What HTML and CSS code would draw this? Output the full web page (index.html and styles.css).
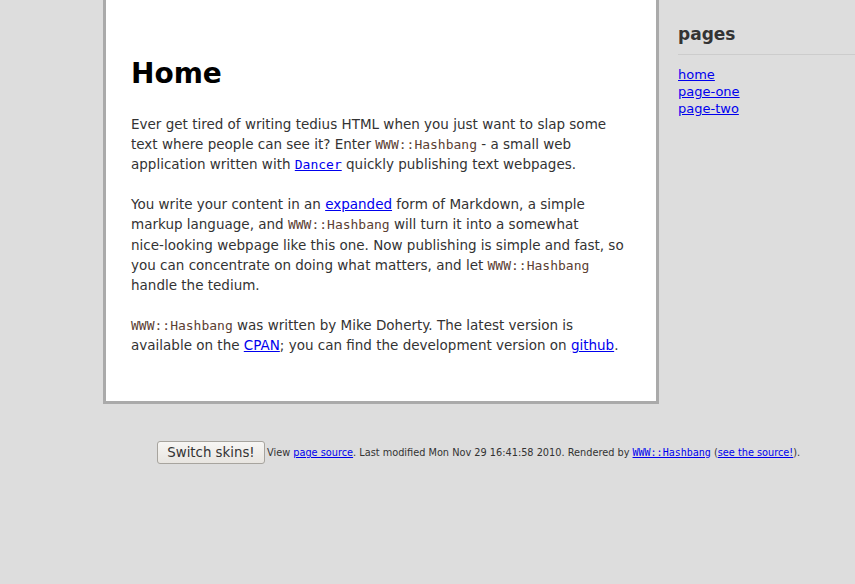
FILE: index.html
```html
<!DOCTYPE html>
<html>
<head>
<meta charset="utf-8">
<title>Home</title>
<link rel="stylesheet" href="styles.css">
</head>
<body>
<div class="page">
  <div class="main">
    <h1 class="title">Home</h1>
    <p class="para">Ever get tired of writing tedius HTML when you just want to slap some text where people can see it? Enter <code class="code">WWW::Hashbang</code> - a small web application written with <a href="#"><code class="code link-code">Dancer</code></a> quickly publishing text webpages.</p>
    <p class="para">You write your content in an <a href="#">expanded</a> form of Markdown, a simple markup language, and <code class="code">WWW::Hashbang</code> will turn it into a somewhat <span class="nowrap">nice-looking</span> webpage like this one. Now publishing is simple and fast, so you can concentrate on doing what matters, and let <code class="code">WWW::Hashbang</code> handle the tedium.</p>
    <p class="para">
<code class="code">WWW::Hashbang</code> was written by Mike Doherty. The latest version is available on the <a href="#">CPAN</a>; you can find the development version on <a href="#">github</a>.</p>
  </div>
  <div class="sidebar">
    <h2 class="side-title">pages</h2>
    <ul class="side-list">
      <li><a href="#">home</a></li>
      <li><a href="#">page-one</a></li>
      <li><a href="#">page-two</a></li>
    </ul>
  </div>
</div>
<div class="footer">
  <button class="skin-btn">Switch skins!</button>
  <span class="foot-text">View <a href="#">page source</a>. Last modified Mon Nov 29 16:41:58 2010. Rendered by <a href="#"><code class="foot-code">WWW::Hashbang</code></a> (<a href="#">see the source!</a>).</span>
</div>
</body>
</html>
```
FILE: styles.css
```css
html, body {
  margin: 0;
  padding: 0;
  background: #dddddd;
}
body {
  font-family: "DejaVu Sans", Verdana, sans-serif;
  color: #333333;
}
a {
  color: #0000ee;
}
.page {
  display: flex;
  align-items: flex-start;
}
.main {
  margin-left: 103px;
  width: 500px;
  flex-shrink: 0;
  background: #ffffff;
  border: 3px solid #aaaaaa;
  border-top: none;
  padding: 50px 25px 26px 25px;
}
.title {
  font-size: 28px;
  font-weight: bold;
  color: #000000;
  margin: 0 0 16px 0;
  line-height: 48px;
}
.para {
  font-size: 13.5px;
  line-height: 20.2px;
  margin: 0 0 19.5px 0;
}
.nowrap {
  white-space: nowrap;
}
.code {
  font-family: "DejaVu Sans Mono", monospace;
  font-size: 13px;
  line-height: 1;
  color: #5c4033;
}
.link-code {
  color: #0000ee;
}
.sidebar {
  flex: 1;
  margin-left: 19px;
  padding-top: 24px;
}
.side-title {
  font-size: 17px;
  font-weight: bold;
  color: #333333;
  margin: 0;
  padding-bottom: 10px;
  border-bottom: 1px solid #cccccc;
}
.side-list {
  list-style: none;
  margin: 11px 0 0 0;
  padding: 0;
  font-size: 13px;
  line-height: 17px;
}
.footer {
  display: flex;
  align-items: center;
  margin-top: 37px;
  padding-left: 157px;
}
.skin-btn {
  flex-shrink: 0;
  white-space: nowrap;
  font-family: "DejaVu Sans", sans-serif;
  font-size: 13.33px;
  color: #333333;
  width: 108px;
  height: 23px;
  padding: 0;
  background: linear-gradient(#f7f6f4, #e8e5e0);
  border: 1px solid #a7a49e;
  border-radius: 3px;
  margin-right: 2px;
}
.foot-text {
  white-space: nowrap;
  font-size: 9.75px;
  color: #333333;
}
.foot-code {
  font-family: "DejaVu Sans Mono", monospace;
  font-size: 10px;
  line-height: 1;
}
```
